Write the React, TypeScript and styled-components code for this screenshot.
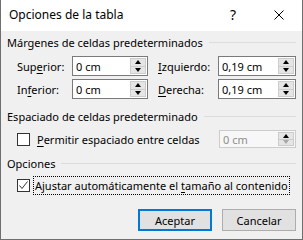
import { createGlobalStyle, styled } from "styled-components";

const Global = createGlobalStyle`
  html, body {
    margin: 0;
    padding: 0;
    background: #ffffff;
  }
  body {
    font-family: "Noto Sans", "DejaVu Sans", sans-serif;
    font-size: 11px;
    color: #000000;
  }
`;

const Dialog = styled.div`
  box-sizing: border-box;
  width: 303px;
  height: 240px;
  display: flex;
  flex-direction: column;
  border: 1px solid #6f6f6f;
  border-top: none;
  background: #f0f0f0;
`;

const TitleBar = styled.div`
  height: 31px;
  display: flex;
  align-items: center;
  background: #ffffff;
  padding-left: 8px;
`;

const Title = styled.span`
  flex: 1;
  font-size: 12px;
  margin-top: -2px;
`;

const TitleButton = styled.span<{ $w: number }>`
  width: ${(p) => p.$w}px;
  display: flex;
  justify-content: center;
  align-items: center;
  font-size: 14px;
  margin-top: -2px;
`;

const Body = styled.div`
  flex: 1;
  display: flex;
  flex-direction: column;
  padding: 4px 6px 0 6px;
`;

const GroupHeader = styled.div<{ $mt?: number }>`
  display: flex;
  align-items: center;
  gap: 6px;
  height: 14px;
  margin-top: ${(p) => p.$mt ?? 0}px;
  &::after {
    content: "";
    flex: 1;
    height: 1px;
    background: #dcdcdc;
  }
`;

const MarginGrid = styled.div`
  display: grid;
  grid-template-columns: 55px 76px 10px 60px 78px;
  grid-auto-rows: 20px;
  row-gap: 3px;
  align-items: center;
  margin: 7px 0 0 10px;
`;

const FieldLabel = styled.label`
  white-space: nowrap;
`;

const Key = styled.u`
  text-underline-offset: 2px;
`;

const SpinBox = styled.div<{ $disabled?: boolean }>`
  box-sizing: border-box;
  height: 100%;
  display: flex;
  border: 1px solid ${(p) => (p.$disabled ? "#cccccc" : "#7a7a7a")};
  background: ${(p) => (p.$disabled ? "#f7f7f7" : "#ffffff")};
  color: ${(p) => (p.$disabled ? "#8d8d8d" : "#000000")};
`;

const SpinValue = styled.span`
  flex: 1;
  padding-left: 3px;
  display: flex;
  align-items: center;
`;

const SpinButtons = styled.div`
  width: 16px;
  display: flex;
  flex-direction: column;
  padding: 1px 1px 1px 0;
`;

const SpinButton = styled.div`
  flex: 1;
  display: flex;
  align-items: center;
  justify-content: center;
  background: #e5e5e5;
  border: 1px solid #cccccc;
  & + & {
    border-top: none;
  }
`;

const Arrow = styled.span<{ $down?: boolean; $dim?: boolean }>`
  width: 0;
  height: 0;
  border-left: 3.5px solid transparent;
  border-right: 3.5px solid transparent;
  ${(p) =>
    p.$down
      ? `border-top: 4px solid ${p.$dim ? "#a8a8a8" : "#000"};`
      : `border-bottom: 4px solid ${p.$dim ? "#a8a8a8" : "#000"};`}
`;

const CheckRow = styled.div<{ $mt: number }>`
  display: flex;
  align-items: center;
  height: 18px;
  margin: ${(p) => p.$mt}px 0 0 10px;
`;

const CheckBox = styled.span`
  box-sizing: border-box;
  width: 13px;
  height: 13px;
  border: 1px solid #333333;
  background: #ffffff;
  display: flex;
  align-items: center;
  justify-content: center;
  flex: none;
`;

const CheckLabel = styled.span<{ $focus?: boolean }>`
  margin-left: ${(p) => (p.$focus ? 3 : 5)}px;
  padding: 1px 1px;
  border: 1px dotted ${(p) => (p.$focus ? "#000" : "transparent")};
  white-space: nowrap;
`;

const SpacingBox = styled.div`
  margin-left: auto;
  width: 77px;
  height: 18px;
`;

const Buttons = styled.div`
  display: flex;
  justify-content: flex-end;
  gap: 10px;
  margin-top: 15px;
`;

const Button = styled.button<{ $default?: boolean }>`
  box-sizing: border-box;
  width: 74px;
  height: 22px;
  font-family: inherit;
  font-size: 11px;
  color: #000;
  background: #e1e1e1;
  border: ${(p) => (p.$default ? "2px solid #0078d7" : "1px solid #adadad")};
  padding: 0;
`;

function Spin({ value, disabled }: { value: string; disabled?: boolean }) {
  return (
    <SpinBox $disabled={disabled}>
      <SpinValue>{value}</SpinValue>
      <SpinButtons>
        <SpinButton>
          <Arrow />
        </SpinButton>
        <SpinButton>
          <Arrow $down $dim={disabled} />
        </SpinButton>
      </SpinButtons>
    </SpinBox>
  );
}

export default function App() {
  return (
    <>
      <Global />
      <Dialog>
        <TitleBar>
          <Title>Opciones de la tabla</Title>
          <TitleButton $w={46}>?</TitleButton>
          <TitleButton $w={46}>
            <svg width="10" height="10" viewBox="0 0 10 10">
              <path d="M0.5 0.5 L9.5 9.5 M9.5 0.5 L0.5 9.5" stroke="#000" strokeWidth="1" />
            </svg>
          </TitleButton>
        </TitleBar>
        <Body>
          <GroupHeader>Márgenes de celdas predeterminados</GroupHeader>
          <MarginGrid>
            <FieldLabel>
              Sup<Key>e</Key>rior:
            </FieldLabel>
            <Spin value="0 cm" />
            <span />
            <FieldLabel>
              <Key>I</Key>zquierdo:
            </FieldLabel>
            <Spin value="0,19 cm" />
            <FieldLabel>
              In<Key>f</Key>erior:
            </FieldLabel>
            <Spin value="0 cm" />
            <span />
            <FieldLabel>
              <Key>D</Key>erecha:
            </FieldLabel>
            <Spin value="0,19 cm" />
          </MarginGrid>
          <GroupHeader $mt={10}>Espaciado de celdas predeterminado</GroupHeader>
          <CheckRow $mt={7}>
            <CheckBox />
            <CheckLabel>
              <Key>P</Key>ermitir espaciado entre celdas
            </CheckLabel>
            <SpacingBox>
              <Spin value="0 cm" disabled />
            </SpacingBox>
          </CheckRow>
          <GroupHeader $mt={8}>Opciones</GroupHeader>
          <CheckRow $mt={6}>
            <CheckBox>
              <svg width="11" height="11" viewBox="0 0 11 11">
                <path d="M1.5 5.5 L4 8.5 L9.5 1.5" fill="none" stroke="#333" strokeWidth="1" />
              </svg>
            </CheckBox>
            <CheckLabel $focus>
              Ajustar automáticamente el <Key>t</Key>amaño al contenido
            </CheckLabel>
          </CheckRow>
          <Buttons>
            <Button $default>Aceptar</Button>
            <Button>Cancelar</Button>
          </Buttons>
        </Body>
      </Dialog>
    </>
  );
}
